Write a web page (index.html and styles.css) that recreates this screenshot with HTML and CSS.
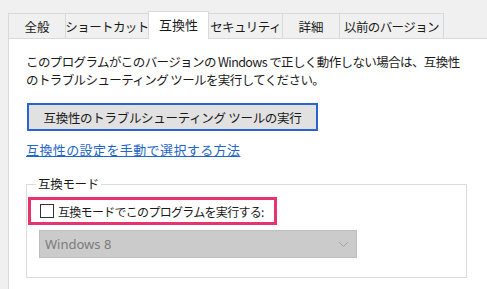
FILE: index.html
```html
<!DOCTYPE html>
<html lang="ja">
<head>
  <meta charset="UTF-8" />
  <title>プロパティ - 互換性</title>
  <link rel="stylesheet" href="styles.css">
</head>
<body>
  <div class="tabs">
    <div class="tab t-general">全般</div>
    <div class="tab t-shortcut">ショートカット</div>
    <div class="tab t-compat activa">互換性</div>
    <div class="tab t-security">セキュリティ</div>
    <div class="tab t-detail">詳細</div>
    <div class="tab t-prev">以前のバージョン</div>
  </div>
  <div class="panel">
    <p class="intro">このプログラムがこのバージョンの Windows で正しく動作しない場合は、互換性<br>のトラブルシューティング ツールを実行してください。</p>
    <button class="btn-solucionar">互換性のトラブルシューティング ツールの実行</button>
    <a class="enlace" href="#">互換性の設定を手動で選択する方法</a>
    <fieldset class="grupo">
      <legend>互換モード</legend>
      <label class="marcado">
        <span class="casilla"></span>
        <span class="etiqueta">互換モードでこのプログラムを実行する:</span>
      </label>
      <div class="selector">
        <span>Windows 8</span>
        <svg width="11" height="7" viewBox="0 0 11 7"><path d="M1 1 L5.5 5.5 L10 1" fill="none" stroke="#a3a3a3" stroke-width="1"/></svg>
      </div>
    </fieldset>
  </div>
</body>
</html>
```

FILE: styles.css
```css
* { box-sizing: border-box; }
body {
  margin: 0; padding: 0; background: #f0f0f0; width: 487px; height: 289px; overflow: hidden;
  font-family: "Noto Sans CJK JP", "Noto Sans", sans-serif; font-size: 12px; color: #1a1a1a;
}
.tabs { display: flex; padding: 13px 0 0 8px; height: 38px; align-items: flex-end; }
.tab {
  height: 25px; border: 1px solid #d9d9d9; border-bottom: none; border-right: none;
  background: #f0f0f0; display: flex; align-items: center; justify-content: center;
  letter-spacing: -0.6px; font-size: 12.5px; white-space: nowrap; flex-shrink: 0;
}
.t-general { width: 57px; letter-spacing: 0; }
.t-shortcut { width: 83px; }
.t-compat { width: 61px; }
.t-security { width: 74px; }
.t-detail { width: 57px; letter-spacing: 0; }
.t-prev { width: 105px; border-right: 1px solid #d9d9d9; }
.tab.activa {
  height: 28px; background: #fff; border-right: 1px solid #d9d9d9; margin-right: -1px;
  position: relative; z-index: 2; margin-bottom: -1px; padding-bottom: 2px; font-size: 13px;
  letter-spacing: 0;
}
.panel {
  margin-left: 8px; height: 251px; background: #fff;
  border-top: 1px solid #d9d9d9; border-left: 1px solid #d9d9d9;
  padding: 14px 0 0 17px;
}
.intro { margin: 0; line-height: 18px; letter-spacing: -0.6px; font-size: 12.5px; }
.btn-solucionar {
  display: block; margin: 14px 0 0 1px; width: 291px; height: 28px;
  background: #e1e1e1; border: 2px solid #2b63d3; font-family: inherit;
  font-size: 12.5px; letter-spacing: -0.3px; color: #1a1a1a; padding: 0;
}
.enlace {
  display: block; width: max-content; margin-top: 10px; color: #1f66c8; text-decoration: underline;
  font-size: 13px; letter-spacing: 0.4px; line-height: 18px;
}
.grupo {
  margin: 18px 0 0 0; width: 441px; height: 101px; border: 1px solid #dcdcdc;
  padding: 0 0 0 1px;
}
.grupo legend { padding: 0 2px; margin-left: 8px; font-size: 12.5px; letter-spacing: -0.3px; line-height: 14px; }
.marcado {
  display: flex; align-items: center; gap: 4px; width: 249px; height: 28px;
  border: 3px solid #e8336e; padding-left: 9px; font-size: 12px; letter-spacing: -0.7px;
  margin-top: 6px; white-space: nowrap;
}
.casilla { width: 14px; height: 14px; border: 1px solid #333; background: #fff; flex-shrink: 0; }
.selector {
  margin: 5px 0 0 11px; width: 318px; height: 28px; background: #cbcbcb;
  border: 1px solid #bfbfbf; display: flex; align-items: center; justify-content: space-between;
  padding: 0 7px 0 5px; color: #7c7c7c; font-size: 13px;
}
.selector span { font-family: "Noto Sans", sans-serif; }
```
